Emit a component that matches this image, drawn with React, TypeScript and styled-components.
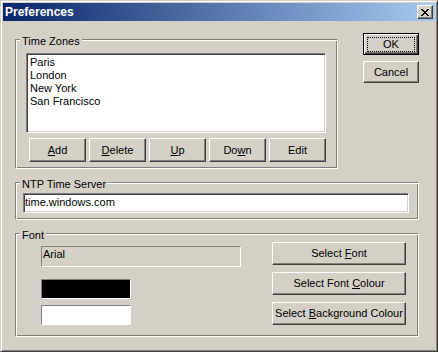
import React from 'react';
import styled, { createGlobalStyle, css } from 'styled-components';

const Global = createGlobalStyle`
  html, body { margin: 0; padding: 0; background: #d4d0c8; }
  body {
    font-family: "Liberation Sans", Arial, sans-serif;
    font-size: 11px;
    line-height: 13px;
    color: #000;
  }
  * { box-sizing: border-box; }
`;

const Window = styled.div`
  width: 438px;
  height: 352px;
  background: #d4d0c8;
  border: 1px solid;
  border-color: #d4d0c8 #404040 #404040 #d4d0c8;
  box-shadow: inset 1px 1px #fff, inset -1px -1px #808080;
  padding: 2px;
  display: flex;
  flex-direction: column;
`;

const TitleBar = styled.div`
  height: 18px;
  flex: none;
  background: linear-gradient(to right, #0a246a, #a6caf0);
  display: flex;
  align-items: center;
  justify-content: space-between;
  padding: 0 2px;
`;

const TitleText = styled.span`
  color: #fff;
  font-weight: bold;
  font-size: 12px;
  line-height: 18px;
`;

const CloseButton = styled.div`
  width: 16px;
  height: 14px;
  background: #d4d0c8;
  border: 1px solid;
  border-color: #fff #404040 #404040 #fff;
  box-shadow: inset -1px -1px #808080;
  display: flex;
  align-items: center;
  justify-content: center;
  padding-left: 0px;
`;

const Body = styled.div`
  display: flex;
  flex-direction: column;
  padding: 12px 16px 0 12px;
`;

const TopRow = styled.div`
  display: flex;
  align-items: flex-start;
  gap: 25px;
`;

const Group = styled.div<{ $w?: number; $h: number; $mt: number }>`
  position: relative;
  width: ${(p) => (p.$w ? `${p.$w}px` : '100%')};
  height: ${(p) => p.$h}px;
  margin-top: ${(p) => p.$mt}px;
  border: 1px solid;
  border-color: #808080 #fff #fff #808080;
  box-shadow: inset 1px 1px #fff, inset -1px -1px #808080;
`;

const GroupLabel = styled.span`
  position: absolute;
  top: -5px;
  left: 4px;
  padding: 0 2px;
  background: #d4d0c8;
  line-height: 13px;
  white-space: nowrap;
`;

const GroupInner = styled.div<{ $pad: string }>`
  padding: ${(p) => p.$pad};
`;

const sunken = css`
  border: 1px solid;
  border-color: #808080 #fff #fff #808080;
  box-shadow: inset 1px 1px #404040, inset -1px -1px #d4d0c8;
`;

const ListBox = styled.ul`
  ${sunken};
  width: 300px;
  height: 80px;
  margin: 0;
  padding: 2px 3px;
  list-style: none;
  background: #fff;
`;

const ListItem = styled.li`
  line-height: 13px;
  white-space: nowrap;
`;

const ButtonRow = styled.div`
  display: flex;
  gap: 3px;
  margin: 5px 0 0 3px;
`;

const Button = styled.div<{ $w: number; $h: number; $default?: boolean }>`
  width: ${(p) => p.$w}px;
  height: ${(p) => p.$h}px;
  flex: none;
  background: #d4d0c8;
  color: #000;
  display: flex;
  align-items: center;
  justify-content: center;
  white-space: nowrap;
  border: 1px solid;
  ${(p) =>
    p.$default
      ? css`
          border-color: #000;
          box-shadow: inset 1px 1px #fff, inset -1px -1px #404040, inset -2px -2px #808080;
        `
      : css`
          border-color: #fff #404040 #404040 #fff;
          box-shadow: inset -1px -1px #808080;
        `}
`;

const FocusRing = styled.span`
  flex: 1;
  align-self: stretch;
  margin: 3px 3px 2px 3px;
  border: 1px dotted #000;
  display: flex;
  align-items: center;
  justify-content: center;
`;

const Mn = styled.u`
  text-decoration: underline;
  text-underline-offset: 1px;
`;

const SideColumn = styled.div`
  display: flex;
  flex-direction: column;
  gap: 6px;
  width: 56px;
`;

const EditField = styled.div`
  ${sunken};
  width: 386px;
  height: 20px;
  background: #fff;
  padding: 2px 1px 0 1px;
  white-space: nowrap;
`;

const FontRow = styled.div`
  display: flex;
  justify-content: space-between;
  padding: 0 12px 0 25px;
`;

const FontLeft = styled.div`
  display: flex;
  flex-direction: column;
  padding-top: 12px;
`;

const StaticField = styled.div`
  width: 200px;
  height: 21px;
  border: 1px solid;
  border-color: #808080 #fff #fff #808080;
  padding: 1px 0 0 1px;
`;

const Swatch = styled.div<{ $color: string; $mt: number }>`
  width: 90px;
  height: 20px;
  margin-top: ${(p) => p.$mt}px;
  background: ${(p) => p.$color};
  border: 1px solid;
  border-color: #808080 #fff #fff #808080;
`;

const FontRight = styled.div`
  display: flex;
  flex-direction: column;
  gap: 7px;
  padding-top: 8px;
`;

const CloseIcon = () => (
  <svg width="8" height="7" viewBox="0 0 8 7" shapeRendering="crispEdges">
    <path
      fill="#000"
      d="M0 0h2v1H0zM6 0h2v1H6zM1 1h2v1H1zM5 1h2v1H5zM2 2h4v1H2zM3 3h2v1H3zM2 4h4v1H2zM1 5h2v1H1zM5 5h2v1H5zM0 6h2v1H0zM6 6h2v1H6z"
    />
  </svg>
);

const zones = ['Paris', 'London', 'New York', 'San Francisco'];

export default function App() {
  return (
    <>
      <Global />
      <Window>
        <TitleBar>
          <TitleText>Preferences</TitleText>
          <CloseButton>
            <CloseIcon />
          </CloseButton>
        </TitleBar>
        <Body>
          <TopRow>
            <Group $w={323} $h={130} $mt={6}>
              <GroupLabel>Time Zones</GroupLabel>
              <GroupInner $pad="13px 0 0 10px">
                <ListBox>
                  {zones.map((z) => (
                    <ListItem key={z}>{z}</ListItem>
                  ))}
                </ListBox>
                <ButtonRow>
                  <Button $w={57} $h={24}>
                    <Mn>A</Mn>dd
                  </Button>
                  <Button $w={57} $h={24}>
                    <Mn>D</Mn>elete
                  </Button>
                  <Button $w={57} $h={24}>
                    <Mn>U</Mn>p
                  </Button>
                  <Button $w={57} $h={24}>
                    Do<Mn>w</Mn>n
                  </Button>
                  <Button $w={57} $h={24}>
                    Edit
                  </Button>
                </ButtonRow>
              </GroupInner>
            </Group>
            <SideColumn>
              <Button $w={56} $h={22} $default>
                <FocusRing>OK</FocusRing>
              </Button>
              <Button $w={56} $h={22}>
                Cancel
              </Button>
            </SideColumn>
          </TopRow>
          <Group $h={38} $mt={13}>
            <GroupLabel>NTP Time Server</GroupLabel>
            <GroupInner $pad="10px 0 0 7px">
              <EditField>time.windows.com</EditField>
            </GroupInner>
          </Group>
          <Group $h={104} $mt={13}>
            <GroupLabel>Font</GroupLabel>
            <FontRow>
              <FontLeft>
                <StaticField>Arial</StaticField>
                <Swatch $color="#000" $mt={12} />
                <Swatch $color="#fff" $mt={6} />
              </FontLeft>
              <FontRight>
                <Button $w={134} $h={23}>
                  Select&nbsp;<Mn>F</Mn>ont
                </Button>
                <Button $w={134} $h={23}>
                  Select Font&nbsp;<Mn>C</Mn>olour
                </Button>
                <Button $w={134} $h={23}>
                  Select&nbsp;<Mn>B</Mn>ackground Colour
                </Button>
              </FontRight>
            </FontRow>
          </Group>
        </Body>
      </Window>
    </>
  );
}
